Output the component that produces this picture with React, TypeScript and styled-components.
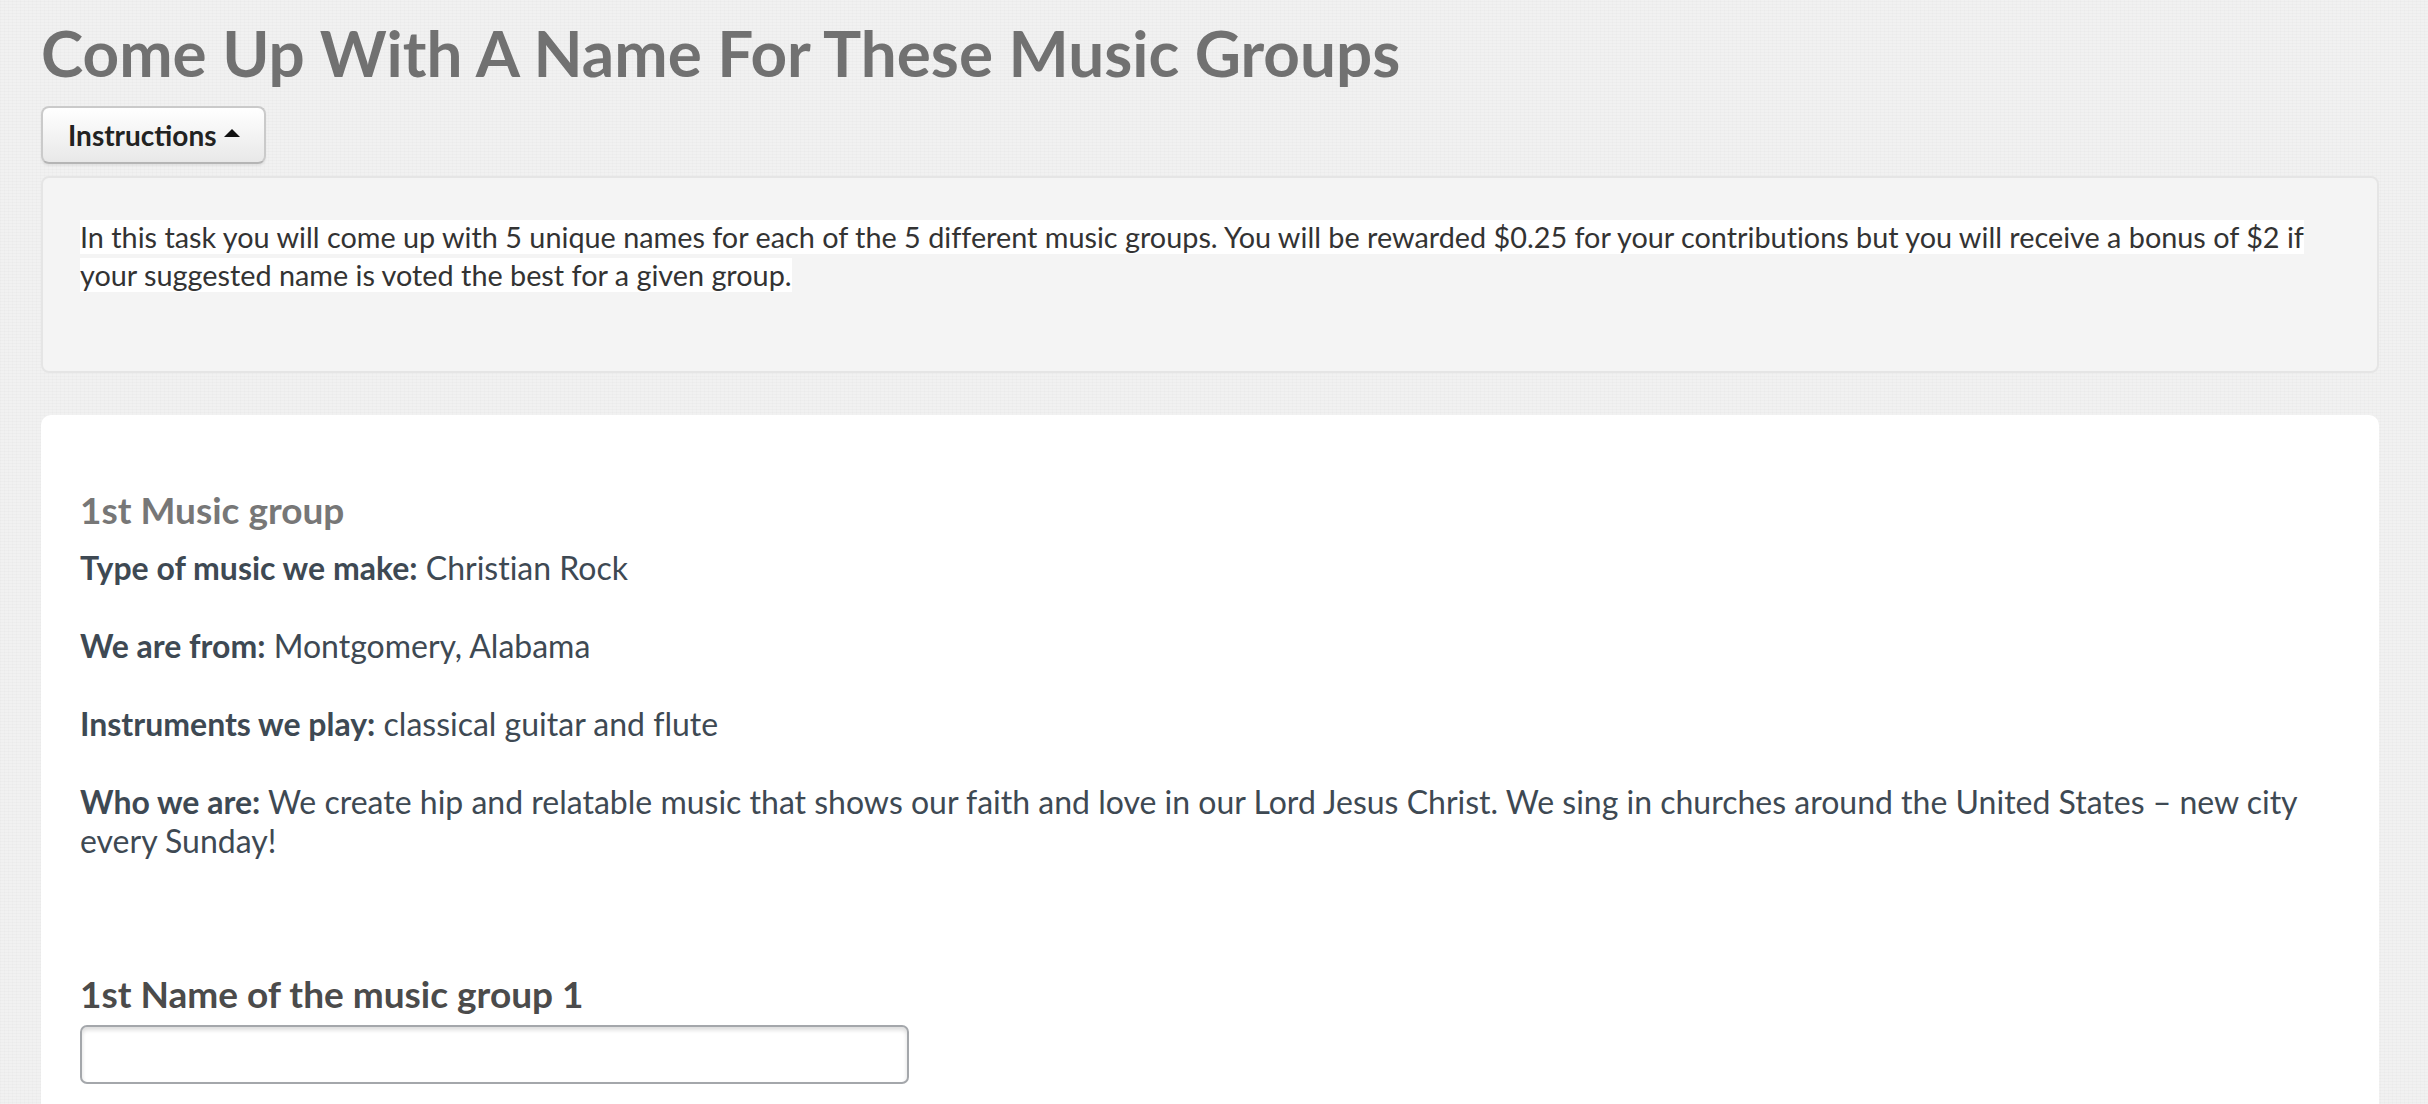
import React from "react";
import styled, { createGlobalStyle } from "styled-components";

const GlobalStyle = createGlobalStyle`
  html, body {
    margin: 0;
    padding: 0;
  }
  body {
    background-color: #f1f1f1;
    background-image:
      repeating-linear-gradient(0deg, rgba(0, 0, 0, 0.014) 0 1px, transparent 1px 3px),
      repeating-linear-gradient(90deg, rgba(0, 0, 0, 0.012) 0 1px, transparent 1px 4px);
    font-family: Lato, "Open Sans", "Liberation Sans", sans-serif;
    font-variant-ligatures: no-common-ligatures;
    color: #333;
  }
`;

const Page = styled.div`
  margin: 0 49px 0 41px;
  padding-top: 15px;
`;

const Title = styled.h1`
  margin: 0;
  font-size: 63.8px;
  line-height: 1.2;
  font-weight: 700;
  color: #717171;
`;

const ToggleButton = styled.button`
  display: inline-flex;
  align-items: center;
  gap: 7px;
  height: 58px;
  margin-top: 14px;
  padding: 0 24px 0 25px;
  font-family: inherit;
  font-size: 28px;
  font-weight: 700;
  color: #222;
  background: linear-gradient(#ffffff, #e8e8e8);
  border: 2px solid #cacaca;
  border-bottom-color: #b5b5b5;
  border-radius: 8px;
  box-shadow: 0 2px 2px rgba(0, 0, 0, 0.06);
  cursor: pointer;
`;

const Caret = styled.span`
  width: 0;
  height: 0;
  border-left: 8px solid transparent;
  border-right: 8px solid transparent;
  border-bottom: 8px solid #111;
  margin-bottom: 4px;
`;

const Well = styled.div`
  margin-top: 12px;
  padding: 40px 38px 37px 37px;
  background: #f4f4f4;
  border: 2px solid #e5e5e5;
  border-radius: 8px;
`;

const WellText = styled.p`
  margin: 0 0 40px;
  font-size: 28.8px;
  line-height: 38.3px;
  color: #333;
`;

const Mark = styled.span`
  background: #ffffff;
`;

const Card = styled.div`
  margin-top: 42px;
  padding: 73px 40px 40px 39px;
  background: #ffffff;
  border-radius: 10px;
`;

const GroupTitle = styled.h3`
  margin: 0 0 15px;
  font-size: 37px;
  line-height: 1.2;
  font-weight: 700;
  color: #777777;
`;

const Fact = styled.p`
  margin: 0 0 39px;
  font-size: 32px;
  line-height: 39px;
  color: #3e4953;

  &:last-child {
    margin-bottom: 0;
  }

  strong {
    font-weight: 700;
  }
`;

const Field = styled.div`
  margin-top: 112px;
  display: flex;
  flex-direction: column;
  gap: 9px;
`;

const FieldLabel = styled.label`
  font-size: 37px;
  line-height: 1.2;
  font-weight: 700;
  color: #4b4b4b;
`;

const NameInput = styled.input`
  box-sizing: border-box;
  width: 829px;
  height: 59px;
  padding: 0 14px;
  font-family: inherit;
  font-size: 28px;
  border: 2px solid #a4a7ab;
  border-radius: 7px;
  box-shadow: inset 0 3px 4px rgba(0, 0, 0, 0.14);
  background: #fff;
  outline: none;
`;

const facts = [
  { label: "Type of music we make:", value: "Christian Rock" },
  { label: "We are from:", value: "Montgomery, Alabama" },
  { label: "Instruments we play:", value: "classical guitar and flute" },
  {
    label: "Who we are:",
    value:
      "We create hip and relatable music that shows our faith and love in our Lord Jesus Christ. We sing in churches around the United States \u2013 new city every Sunday!",
  },
];

export default function App() {
  return (
    <>
      <GlobalStyle />
      <Page>
        <Title>Come Up With A Name For These Music Groups</Title>
        <ToggleButton type="button">
          Instructions
          <Caret />
        </ToggleButton>
        <Well>
          <WellText>
            <Mark>
              In this task you will come up with 5 unique names for each of the 5 different music groups. You
              will be rewarded $0.25 for your contributions but you will receive a bonus of $2 if your suggested
              name is voted the best for a given group.
            </Mark>
          </WellText>
        </Well>
        <Card>
          <GroupTitle>1st Music group</GroupTitle>
          <div>
            {facts.map((f) => (
              <Fact key={f.label}>
                <strong>{f.label}</strong> {f.value}
              </Fact>
            ))}
          </div>
          <Field>
            <FieldLabel htmlFor="name-1-1">1st Name of the music group 1</FieldLabel>
            <NameInput id="name-1-1" type="text" />
          </Field>
        </Card>
      </Page>
    </>
  );
}
